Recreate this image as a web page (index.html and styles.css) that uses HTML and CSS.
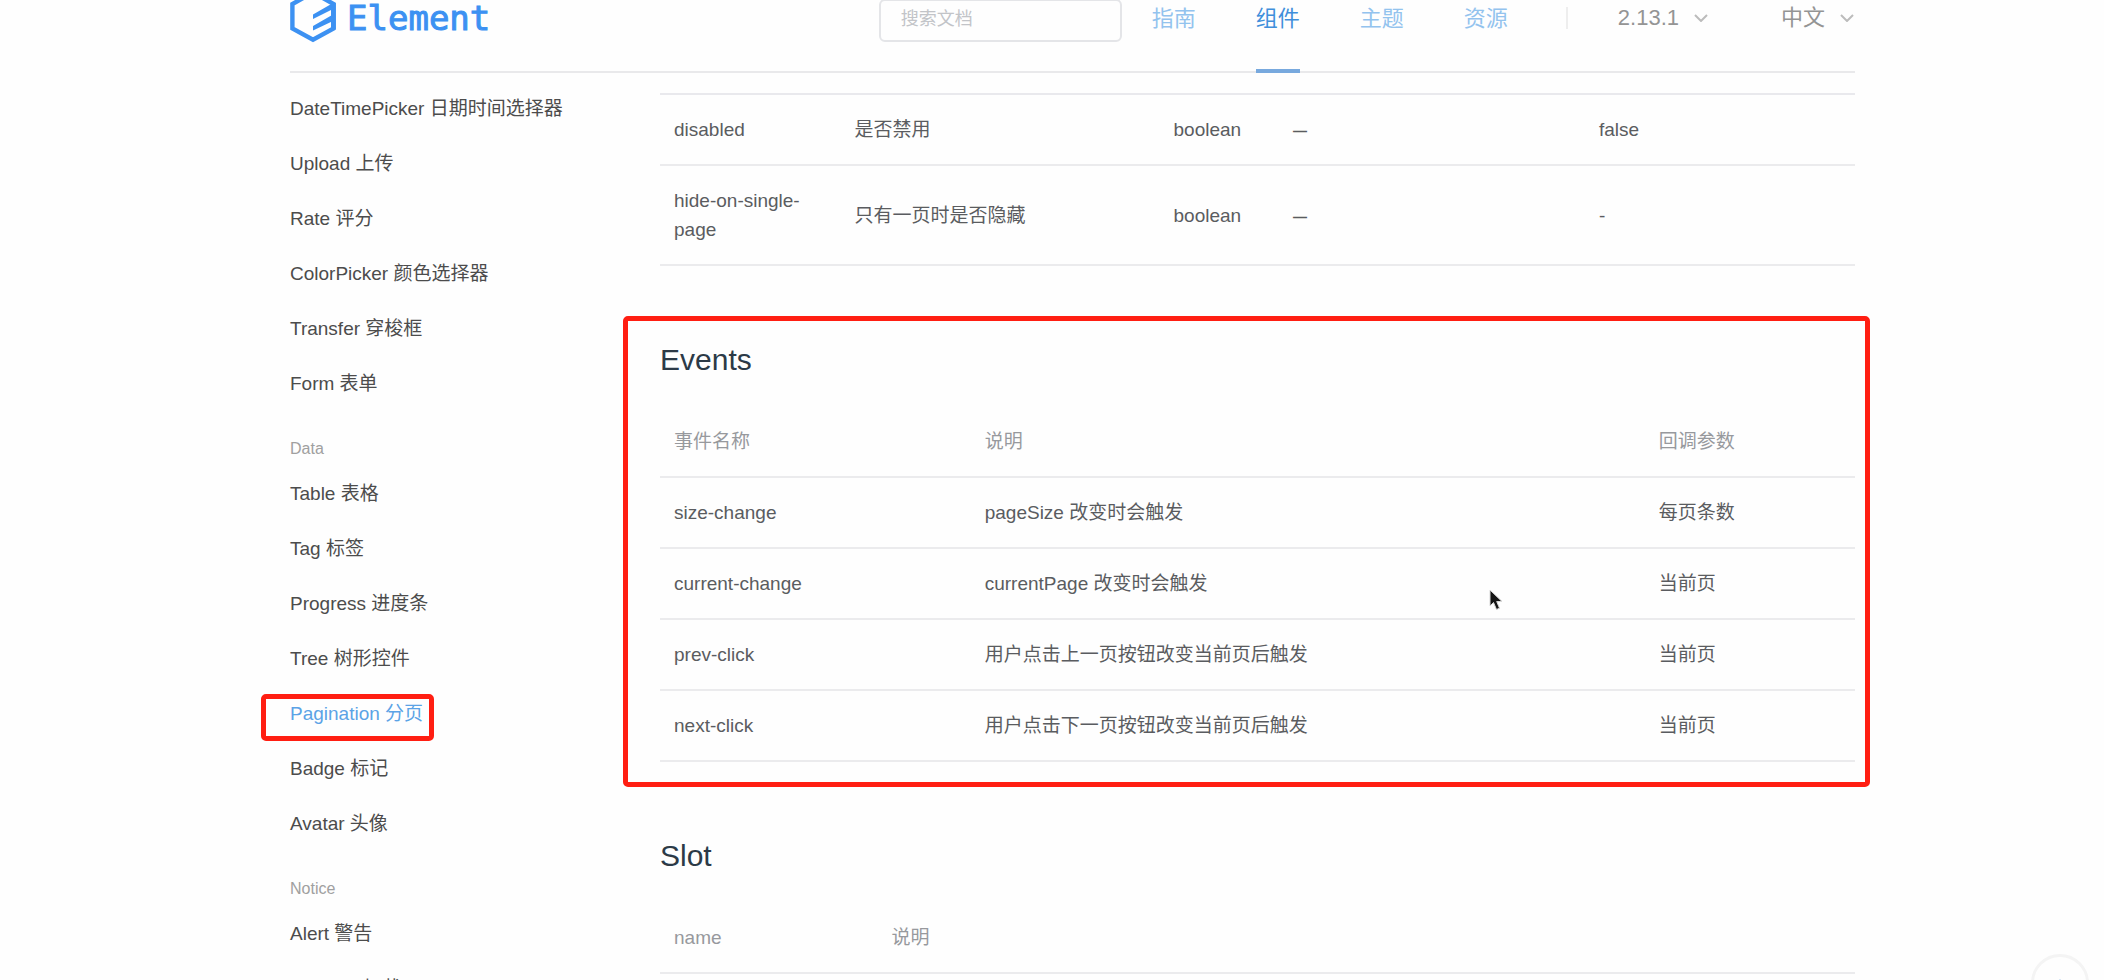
FILE: index.html
```html
<!DOCTYPE html>
<html lang="zh-CN">
<head>
<meta charset="utf-8">
<title>Element - Pagination 分页</title>
<link rel="stylesheet" href="styles.css">
</head>
<body>
<div class="page">
  <header class="header">
    <a class="logo" href="#">
      <svg class="logo-mark" viewBox="0 0 46 54" aria-hidden="true">
        <path d="M23 1.500 43.600 13V37.500L23 48.800 2.400 37.500V13Z" fill="none" stroke="currentColor" stroke-width="4.400"/>
        <path d="M23 23.500 43 12V18L23 28ZM23 35 43 23.500V30L23 39.500Z" fill="currentColor"/>
        <path d="M41 12H45.800V38H41Z" fill="currentColor"/>
      </svg>
      <span class="logo-text">Element</span>
    </a>
    <input class="search" type="search" placeholder="搜索文档" aria-label="搜索文档">
    <nav class="nav">
      <a href="#">指南</a>
      <a class="active" href="#">组件</a>
      <a href="#">主题</a>
      <a href="#">资源</a>
    </nav>
    <span class="divider"></span>
    <div class="menus">
      <button class="menu" type="button">2.13.1
        <svg class="chevron" viewBox="0 0 14 8" aria-hidden="true"><path d="M1 1 7 7 13 1"/></svg>
      </button>
      <button class="menu" type="button">中文
        <svg class="chevron" viewBox="0 0 14 8" aria-hidden="true"><path d="M1 1 7 7 13 1"/></svg>
      </button>
    </div>
  </header>

  <div class="body">
    <aside class="sidebar">
      <a href="#">DateTimePicker 日期时间选择器</a>
      <a href="#">Upload 上传</a>
      <a href="#">Rate 评分</a>
      <a href="#">ColorPicker 颜色选择器</a>
      <a href="#">Transfer 穿梭框</a>
      <a href="#">Form 表单</a>
      <div class="group-title">Data</div>
      <a href="#">Table 表格</a>
      <a href="#">Tag 标签</a>
      <a href="#">Progress 进度条</a>
      <a href="#">Tree 树形控件</a>
      <a class="active" href="#">Pagination 分页</a>
      <a href="#">Badge 标记</a>
      <a href="#">Avatar 头像</a>
      <div class="group-title">Notice</div>
      <a href="#">Alert 警告</a>
      <a href="#">Loading 加载</a>
    </aside>

    <main class="content">
      <table class="table attributes">
        <colgroup><col class="a1"><col class="a2"><col class="a3"><col class="a4"><col></colgroup>
        <tbody>
          <tr><td>disabled</td><td>是否禁用</td><td>boolean</td><td><span class="dash">—</span></td><td>false</td></tr>
          <tr><td>hide-on-single-page</td><td>只有一页时是否隐藏</td><td>boolean</td><td><span class="dash">—</span></td><td>-</td></tr>
        </tbody>
      </table>

      <section class="events">
        <h3>Events</h3>
        <table class="table">
          <colgroup><col class="e1"><col class="e2"><col></colgroup>
          <thead><tr><th>事件名称</th><th>说明</th><th>回调参数</th></tr></thead>
          <tbody>
            <tr><td>size-change</td><td>pageSize 改变时会触发</td><td>每页条数</td></tr>
            <tr><td>current-change</td><td>currentPage 改变时会触发</td><td>当前页</td></tr>
            <tr><td>prev-click</td><td>用户点击上一页按钮改变当前页后触发</td><td>当前页</td></tr>
            <tr><td>next-click</td><td>用户点击下一页按钮改变当前页后触发</td><td>当前页</td></tr>
          </tbody>
        </table>
      </section>

      <section>
        <h3>Slot</h3>
        <table class="table">
          <colgroup><col class="s1"><col></colgroup>
          <thead><tr><th>name</th><th>说明</th></tr></thead>
        </table>
      </section>
    </main>
  </div>

  <button class="backtop" type="button" aria-label="回到顶部">
    <svg viewBox="0 0 14 8" aria-hidden="true"><path d="M7 0 14 8H0Z"/></svg>
  </button>
  <svg class="cursor" viewBox="0 0 14 22" aria-hidden="true"><path d="M1 1V17L4.500 13.500 7.500 20.500 10.500 19.200 7.700 12.500H13Z"/></svg>
</div>
</body>
</html>
```
FILE: styles.css
```css
* {
  box-sizing: border-box;
}

body {
  margin: 0;
  background: #fefefe;
  color: #5a5c60;
  font: 19px/29px "Liberation Sans", "Noto Sans CJK SC", sans-serif;
}

a {
  color: inherit;
  text-decoration: none;
}

button {
  padding: 0;
  border: 0;
  background: none;
  color: inherit;
  font: inherit;
}

.page {
  position: relative;
  height: 100vh;
  overflow: hidden;
  padding: 0 249px 0 290px;
}

/* The header is partly scrolled out of the top of the window */
.header {
  display: flex;
  align-items: center;
  height: 109px;
  margin-top: -36px;
  padding-right: 1px;
  border-bottom: 2px solid #e9e9eb;
  font-size: 22px;
}

.logo {
  display: flex;
  align-items: center;
  gap: 11px;
  margin-right: auto;
  color: #3c91f2;
}

.logo-mark {
  width: 46px;
  height: 54px;
}

.logo-text {
  font: 34px/34px "DejaVu Sans Mono", monospace;
  -webkit-text-stroke: 1px currentColor;
}

.search {
  width: 243px;
  height: 43px;
  margin-top: 6px;
  padding: 0 20px 2px;
  border: 2px solid #e4e5e8;
  border-radius: 6px;
  background: transparent;
  color: #606266;
  font: 18px "Liberation Sans", "Noto Sans CJK SC", sans-serif;
}

.search::placeholder {
  color: #c2c4c8;
}

.nav {
  display: flex;
  align-self: stretch;
  gap: 60px;
  margin-left: 30px;
  color: #93c3ee;
}

.nav a {
  display: flex;
  align-items: center;
  margin-bottom: -2px;
  padding-top: 4px;
  border-bottom: 4px solid transparent;
}

.nav .active {
  border-color: #78a9de;
  color: #3f8fdb;
}

.divider {
  width: 2px;
  height: 22px;
  margin: 0 50px 0 58px;
  background: #eeeeee;
}

.menus {
  display: flex;
  gap: 73px;
  color: #949494;
}

.menu {
  display: flex;
  align-items: center;
  gap: 15px;
}

.chevron {
  width: 14px;
  height: 8px;
  fill: none;
  stroke: #bcbcbc;
  stroke-width: 2;
}

.body {
  display: flex;
}

.sidebar {
  flex: 0 0 370px;
  padding-top: 8px;
  color: #4c4c4c;
}

.sidebar a {
  display: block;
  position: relative;
  line-height: 55px;
}

.sidebar .active {
  width: max-content;
  color: #5ba3e6;
}

.sidebar .active::after {
  content: "";
  position: absolute;
  inset: 8px -11px 0 -29px;
  border: 5px solid #ff1e12;
  border-radius: 5px;
}

.group-title {
  padding: 24px 0 3px;
  color: #a0a0a0;
  font-size: 16px;
  line-height: 28px;
}

.content {
  flex: 1;
  min-width: 0;
}

.table {
  width: 100%;
  border-collapse: separate;
  border-spacing: 0;
  table-layout: fixed;
}

.table th,
.table td {
  padding: 20px 14px;
  border-bottom: 2px solid #ebebed;
  text-align: left;
}

.table th {
  color: #97999d;
  font-weight: 400;
}

.attributes {
  margin-top: 20px;
  border-top: 2px solid #e9e9ed;
}

.dash {
  font-size: 14px;
  font-weight: 700;
  line-height: 14px;
}

.a1 { width: 15.1%; }
.a2 { width: 26.7%; }
.a3 { width: 10%; }
.a4 { width: 25.6%; }
.e1 { width: 26%; }
.e2 { width: 56.4%; }
.s1 { width: 18.2%; }

h3 {
  margin: 0;
  padding: 74px 0 27px;
  color: #2c3a47;
  font-size: 30px;
  font-weight: 400;
  line-height: 40px;
}

.events {
  position: relative;
}

.events::after {
  content: "";
  position: absolute;
  inset: 50px -15px -25px -37px;
  border: 5px solid #ff1e12;
  border-radius: 5px;
}

.backtop {
  position: absolute;
  right: 15px;
  bottom: -32px;
  width: 58px;
  height: 58px;
  border: 3px solid #f4f4f4;
  border-radius: 50%;
}

.backtop svg {
  display: block;
  width: 14px;
  height: 8px;
  margin: 0 auto;
  fill: #a9cdee;
}

.cursor {
  position: absolute;
  top: 589px;
  left: 1489px;
  width: 14px;
  height: 22px;
  fill: #151515;
  stroke: #d8d8d8;
}
```
